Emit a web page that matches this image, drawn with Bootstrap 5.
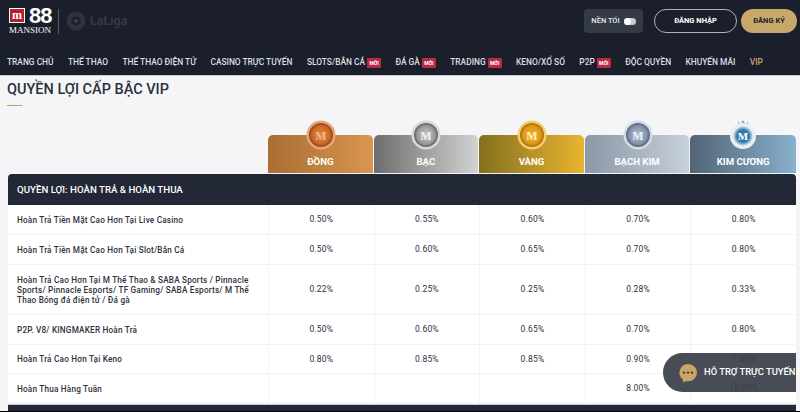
<!DOCTYPE html>
<html lang="vi">
<head>
  <meta charset="UTF-8">
  <title>Quyền lợi cấp bậc VIP</title>
  <link href="https://cdn.jsdelivr.net/npm/bootstrap@5.3.2/dist/css/bootstrap.min.css" rel="stylesheet">
  <style>
    html,body{height:412px;overflow:hidden}
    body{background:#f5f5f7;font-family:Roboto,"Liberation Sans",sans-serif;color:#1c2230}
    .site-head{background:#1a1f2b;height:76px;border-bottom:1px solid #c9ccd2;padding:0 3px 0 7px}
    .head-top{height:42px;padding-left:2px}
    .logo-word{color:#fff;line-height:1;width:43px}
    .logo-box{width:16px;height:15px;background:#b3202c;color:#fff;font:700 12px/12px "Liberation Serif",serif;border:1px solid #fff}
    .logo-88{font:700 22px/16px "Liberation Sans",sans-serif;margin-left:4px;display:inline-block;width:23px;letter-spacing:-1px}
    .logo-name{font:400 9px/9px "Liberation Serif",serif;margin-top:2px;white-space:nowrap}
    .logo-sep{width:1px;height:25px;background:#555b66;margin:0 7px 0 6px}
    .liga-name{color:#333945;font-size:12.5px;font-weight:700}
    .theme-box{background:#353a47;border-radius:4px;width:59px;height:24px;color:#e6e7ea;font-size:7.5px;font-weight:500;margin-right:11px}
    .theme-switch{width:12px;height:7px;background:#c9ccd2;border-radius:4px;display:block;position:relative}
    .theme-switch::before{content:"";position:absolute;left:0;top:0;width:7px;height:7px;border-radius:50%;background:#fff}
    .btn-login,.btn-join{height:24px;border-radius:13px;font-size:7.5px;font-weight:700;padding:0}
    .btn-login{width:83px;border:1px solid #aeb2ba;color:#fff;margin-right:4px}
    .btn-join{width:56px;background:#c8a76b;color:#1a1f2b;border:0}
    .main-nav{font-size:8.4px;font-weight:500;color:#dcdee2;gap:14.4px;height:28px;margin-top:6px;white-space:nowrap}
    .main-nav .is-vip{color:#c8a76b}
    .new-tag{background:#b82a48;color:#fff;font-size:5px;font-weight:700;width:14px;height:10px;border-radius:1px;margin-left:2px;vertical-align:0;display:inline-flex;align-items:center;justify-content:center}
    .page-title{font-size:14.5px;font-weight:500;line-height:21px;margin:3px 0 0 7px;color:#2a303c}
    .title-rule{width:15px;height:1px;background:#c49f5a;margin:5px 0 0 7px}
    .vip-wrap{width:788px;margin:28px 0 0 8px}
    .vip-table{table-layout:fixed;width:788px;border-collapse:separate;border-spacing:0;margin:0}
    .vip-table th,.vip-table td{padding:0;vertical-align:middle}
    .tier-cell{background:#f5f5f7;height:40px;position:relative;border:0}
    .tier-tab{height:38px;border-radius:5px 5px 0 0;color:#fff;font-size:9.6px;font-weight:700;padding-bottom:4px;margin-right:1px;display:flex;align-items:flex-end;justify-content:center}
    .tier-cell:last-child .tier-tab{margin-right:0}
    .tier-medal{position:absolute;left:50%;top:-14px;width:30px;height:30px;margin-left:-15px}
    .bronze{background:linear-gradient(90deg,#a86e32,#da9550)}
    .silver{background:linear-gradient(90deg,#6d6d6d,#d2d2d2)}
    .gold{background:linear-gradient(90deg,#85701f,#e9b430)}
    .platinum{background:linear-gradient(90deg,#8b98a6,#c6d0da)}
    .diamond{background:linear-gradient(90deg,#516474,#89b0cc)}
    .group-row th{background:#222836;color:#fff;height:31px;font-size:9.7px;font-weight:500;padding:1px 0 0 9px;border-radius:4px 4px 0 0}
    .rate-row td{background:#fff;font-size:8.5px;color:#2d323c;border-bottom:1px solid #f3f3f5;text-align:center;font-weight:400;letter-spacing:.2px}
    .rate-row td+td{border-left:1px solid #f3f3f5}
    .rate-row td:first-child{text-align:left;padding-left:9px;padding-right:8px;font-size:8.2px;font-weight:500;line-height:10px}
    .foot-row td{background:#222836;height:7px;border-top:1px solid #c9ccd2}
    .chat-float{position:absolute;left:663px;top:353px;width:133px;height:39px;background:rgba(58,62,71,.93);border-radius:20px 0 0 20px;color:#fff;font-size:9.4px;font-weight:500;gap:6px;padding-left:15px;white-space:nowrap}
    .bottom-edge{position:absolute;left:0;right:0;top:411px;height:1px;background:#000}
  </style>
</head>
<body>

<header class="site-head">
  <div class="head-top d-flex align-items-center">
    <div class="logo-word">
      <div class="d-flex align-items-center"><span class="logo-box text-center">m</span><span class="logo-88">88</span></div>
      <div class="logo-name">MANSION</div>
    </div>
    <div class="logo-sep"></div>
    <svg width="20" height="20" viewBox="0 0 20 20"><circle cx="10" cy="10" r="7" fill="none" stroke="#2e333f" stroke-width="5"/><circle cx="10" cy="10" r="2" fill="#3c3f45"/></svg>
    <span class="liga-name ms-1">LaLiga</span>
    <div class="ms-auto d-flex align-items-center">
      <div class="theme-box d-flex align-items-center justify-content-center gap-1">NỀN TỐI <span class="theme-switch"></span></div>
      <button type="button" class="btn btn-login">ĐĂNG NHẬP</button>
      <button type="button" class="btn btn-join">ĐĂNG KÝ</button>
    </div>
  </div>
  <nav class="main-nav d-flex align-items-center">
    <span>TRANG CHỦ</span>
    <span>THỂ THAO</span>
    <span>THỂ THAO ĐIỆN TỬ</span>
    <span>CASINO TRỰC TUYẾN</span>
    <span>SLOTS/BẮN CÁ<span class="new-tag">MỚI</span></span>
    <span>ĐÁ GÀ<span class="new-tag">MỚI</span></span>
    <span>TRADING<span class="new-tag">MỚI</span></span>
    <span>KENO/XỔ SỐ</span>
    <span>P2P<span class="new-tag">MỚI</span></span>
    <span>ĐỘC QUYỀN</span>
    <span>KHUYẾN MÃI</span>
    <span class="is-vip">VIP</span>
  </nav>
</header>

<h1 class="page-title">QUYỀN LỢI CẤP BẬC VIP</h1>
<div class="title-rule"></div>

<svg width="0" height="0" class="position-absolute">
  <defs>
    <radialGradient id="m-bronze"><stop offset="0" stop-color="#e8873f"/><stop offset=".75" stop-color="#c9682a"/><stop offset="1" stop-color="#8f4518"/></radialGradient>
    <radialGradient id="m-silver"><stop offset="0" stop-color="#c9c9c9"/><stop offset=".75" stop-color="#9a9a9a"/><stop offset="1" stop-color="#5e5e5e"/></radialGradient>
    <radialGradient id="m-gold"><stop offset="0" stop-color="#f2b52a"/><stop offset=".75" stop-color="#dc981a"/><stop offset="1" stop-color="#a36a10"/></radialGradient>
    <radialGradient id="m-plat"><stop offset="0" stop-color="#b4c0d0"/><stop offset=".75" stop-color="#8493ab"/><stop offset="1" stop-color="#566479"/></radialGradient>
    <radialGradient id="m-dia"><stop offset="0" stop-color="#3f86b5"/><stop offset=".6" stop-color="#2f76a8"/><stop offset="1" stop-color="#dfe9f0"/></radialGradient>
  </defs>
</svg>

<div class="vip-wrap">
  <table class="vip-table">
    <colgroup><col style="width:260px"><col><col><col><col><col></colgroup>
    <thead>
      <tr>
        <th class="tier-cell"></th>
        <th class="tier-cell"><div class="tier-tab bronze">ĐỒNG</div><svg class="tier-medal" viewBox="0 0 30 30"><circle cx="15" cy="15" r="14.5" fill="#e9a578"/><circle cx="15" cy="15" r="12" fill="url(#m-bronze)"/><text x="15" y="19.5" font-size="12" font-family="Liberation Serif" text-anchor="middle" fill="#f2b98c">M</text></svg></th>
        <th class="tier-cell"><div class="tier-tab silver">BẠC</div><svg class="tier-medal" viewBox="0 0 30 30"><circle cx="15" cy="15" r="14.5" fill="#d9d9d9"/><circle cx="15" cy="15" r="12" fill="url(#m-silver)"/><text x="15" y="19.5" font-size="12" font-family="Liberation Serif" text-anchor="middle" fill="#f2f2f2">M</text></svg></th>
        <th class="tier-cell"><div class="tier-tab gold">VÀNG</div><svg class="tier-medal" viewBox="0 0 30 30"><circle cx="15" cy="15" r="14.5" fill="#f5cf6a"/><circle cx="15" cy="15" r="12" fill="url(#m-gold)"/><text x="15" y="19.5" font-size="12" font-family="Liberation Serif" text-anchor="middle" fill="#fff0c0">M</text></svg></th>
        <th class="tier-cell"><div class="tier-tab platinum">BẠCH KIM</div><svg class="tier-medal" viewBox="0 0 30 30"><circle cx="15" cy="15" r="14.5" fill="#d5dce6"/><circle cx="15" cy="15" r="12" fill="url(#m-plat)"/><text x="15" y="19.5" font-size="12" font-family="Liberation Serif" text-anchor="middle" fill="#eef2f7">M</text></svg></th>
        <th class="tier-cell"><div class="tier-tab diamond">KIM CƯƠNG</div><svg class="tier-medal" viewBox="0 0 30 30"><path d="M10 1l2 4 3-5 3 5 2-4v7H10z" fill="#7fa9c8"/><circle cx="15" cy="16" r="13" fill="#e8f0f5"/><circle cx="15" cy="16" r="10" fill="url(#m-dia)"/><text x="15" y="20" font-size="11" font-family="Liberation Serif" text-anchor="middle" fill="#fff">M</text></svg></th>
      </tr>
    </thead>
    <tbody>
      <tr class="group-row"><th colspan="6">QUYỀN LỢI: HOÀN TRẢ &amp; HOÀN THUA</th></tr>
      <tr class="rate-row" style="height:30px"><td>Hoàn Trả Tiền Mặt Cao Hơn Tại Live Casino</td><td>0.50%</td><td>0.55%</td><td>0.60%</td><td>0.70%</td><td>0.80%</td></tr>
      <tr class="rate-row" style="height:30px"><td>Hoàn Trả Tiền Mặt Cao Hơn Tại Slot/Bắn Cá</td><td>0.50%</td><td>0.60%</td><td>0.65%</td><td>0.70%</td><td>0.80%</td></tr>
      <tr class="rate-row" style="height:50px"><td>Hoàn Trả Cao Hơn Tại M Thể Thao &amp; SABA Sports / Pinnacle Sports/ Pinnacle Esports/ TF Gaming/ SABA Esports/ M Thể Thao Bóng đá điện tử / Đá gà</td><td>0.22%</td><td>0.25%</td><td>0.25%</td><td>0.28%</td><td>0.33%</td></tr>
      <tr class="rate-row" style="height:30px"><td>P2P. V8/ KINGMAKER Hoàn Trả</td><td>0.50%</td><td>0.60%</td><td>0.65%</td><td>0.70%</td><td>0.80%</td></tr>
      <tr class="rate-row" style="height:29px"><td>Hoàn Trả Cao Hơn Tại Keno</td><td>0.80%</td><td>0.85%</td><td>0.85%</td><td>0.90%</td><td>1.00%</td></tr>
      <tr class="rate-row" style="height:30px"><td>Hoàn Thua Hàng Tuần</td><td></td><td></td><td></td><td>8.00%</td><td>10.00%</td></tr>
      <tr class="foot-row"><td colspan="6"></td></tr>
    </tbody>
  </table>
</div>

<div class="chat-float d-flex align-items-center">
  <svg width="20" height="20" viewBox="0 0 20 20" class="flex-shrink-0"><path d="M10 1a9 8.6 0 0 1 0 17.2c-1 0-1.6 0-2.2-.2L5 19.5V16.5A8.6 8.6 0 0 1 10 1z" fill="#c9a566"/><circle cx="6" cy="9.6" r="1.2" fill="#3a3e47"/><circle cx="10" cy="9.6" r="1.2" fill="#3a3e47"/><circle cx="14" cy="9.6" r="1.2" fill="#3a3e47"/></svg>
  <span>HỖ TRỢ TRỰC TUYẾN</span>
</div>
<div class="bottom-edge"></div>

<script src="https://cdn.jsdelivr.net/npm/bootstrap@5.3.2/dist/js/bootstrap.bundle.min.js"></script>
</body>
</html>
